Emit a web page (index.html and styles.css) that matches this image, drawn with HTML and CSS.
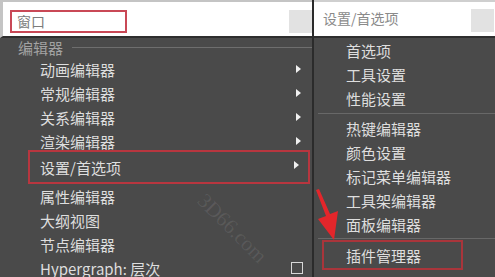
FILE: index.html
```html
<!DOCTYPE html>
<html lang="zh-CN">
<head>
    <meta charset="UTF-8">
    <title>窗口菜单</title>
    <link rel="stylesheet" href="styles.css">
</head>
<body>
    <div class="screen">
        <!-- Main window menu -->
        <section class="menu menu_main">
            <div class="search_bar">
                <div class="search_field">窗口</div>
                <span class="search_btn"></span>
            </div>
            <div class="section_head">编辑器</div>
            <ul class="menu_list">
                <li class="menu_item">动画编辑器<span class="sub_arrow"></span></li>
                <li class="menu_item">常规编辑器<span class="sub_arrow"></span></li>
                <li class="menu_item">关系编辑器<span class="sub_arrow"></span></li>
                <li class="menu_item">渲染编辑器<span class="sub_arrow"></span></li>
                <li class="menu_item menu_item_marked">设置/首选项<span class="sub_arrow"></span></li>
                <li class="menu_item">属性编辑器</li>
                <li class="menu_item">大纲视图</li>
                <li class="menu_item">节点编辑器</li>
                <li class="menu_item">Hypergraph: 层次<span class="check_box"></span></li>
            </ul>
            <span class="watermark watermark_main">3D66.com</span>
        </section>

        <!-- Settings submenu -->
        <section class="menu menu_sub">
            <div class="sub_head">
                <span class="sub_title">设置/首选项</span>
                <span class="search_btn"></span>
            </div>
            <ul class="menu_list sub_list">
                <li class="menu_item">首选项</li>
                <li class="menu_item">工具设置</li>
                <li class="menu_item">性能设置</li>
                <li class="menu_sep"></li>
                <li class="menu_item">热键编辑器</li>
                <li class="menu_item">颜色设置</li>
                <li class="menu_item">标记菜单编辑器</li>
                <li class="menu_item">工具架编辑器</li>
                <li class="menu_item">面板编辑器</li>
                <li class="menu_sep menu_sep_small"></li>
                <li class="menu_item menu_item_marked">插件管理器</li>
            </ul>
        </section>

        <!-- red pointer arrow -->
        <svg class="pointer" width="495" height="277" viewBox="0 0 495 277">
            <polygon points="316,190 319,189 330,214 338,211 334,240 318,219 326,216" fill="#e3262b"/>
        </svg>
    </div>
</body>
</html>
```

FILE: styles.css
```css
* {
    box-sizing: border-box;
}

body {
    margin: 0;
    background: #4a4a4a;
    font-family: "Noto Sans CJK SC", "Noto Sans", sans-serif;
    overflow: hidden;
}

.screen {
    position: relative;
    width: 495px;
    height: 277px;
    display: flex;
    overflow: hidden;
}

.menu {
    position: relative;
    height: 277px;
    background: #4a4a4a;
}

.menu_main {
    width: 314px;
    border-right: 2px solid #2b2b2b;
}

.menu_sub {
    flex: 1;
}

/* White search bar at the top */
.search_bar {
    height: 38px;
    display: flex;
    justify-content: space-between;
    align-items: flex-start;
    padding: 8px 0 0 7px;
    background: #fff;
    border-top: 2px solid #c4c4c4;
    border-left: 3px solid #c4c4c4;
    border-bottom: 2px solid #2e2e2e;
}

.search_field {
    width: 117px;
    height: 23px;
    padding-left: 5px;
    border: 2px solid #c94856;
    font-size: 14px;
    line-height: 19px;
    color: #7c7c7c;
}

.search_btn {
    width: 23px;
    height: 23px;
    background: #e2e2e2;
}

.section_head {
    height: 19px;
    display: flex;
    align-items: center;
    padding-left: 18px;
    font-size: 15px;
    color: #a2a2a2;
}

.section_head::after {
    content: '';
    flex: 1;
    height: 1px;
    margin: 0 0 0 9px;
    background: #6e6e6e;
}

.menu_list {
    list-style: none;
    margin: 0;
    padding: 0;
}

.menu_item {
    height: 24px;
    display: flex;
    align-items: center;
    justify-content: space-between;
    padding: 0 11px 0 40px;
    font-size: 15px;
    color: #dedede;
    white-space: nowrap;
}

.menu_item_marked {
    height: 34px;
    margin: -3px 2px 0 28px;
    padding: 0 9px 0 10px;
    border: 2px solid #b8363f;
}

.sub_arrow {
    width: 0;
    height: 0;
    border-left: 5px solid #f0f0f0;
    border-top: 4px solid transparent;
    border-bottom: 4px solid transparent;
}

.menu_item_marked .sub_arrow {
    margin-top: -4px;
}

.check_box {
    width: 12px;
    height: 12px;
    margin-right: -2px;
    border: 1px solid #d8d8d8;
}

/* Submenu */
.sub_head {
    height: 38px;
    display: flex;
    justify-content: space-between;
    align-items: flex-start;
    padding: 7px 1px 0 9px;
    background: #fff;
    border-top: 2px solid #cfcfcf;
    border-bottom: 2px solid #2e2e2e;
}

.sub_title {
    font-size: 14px;
    line-height: 18px;
    color: #8a8a8a;
}

.sub_list .menu_item {
    padding-left: 32px;
}

.menu_sep {
    height: 6px;
    display: flex;
    align-items: center;
    padding-left: 4px;
}

.menu_sep::before {
    content: '';
    flex: 1;
    height: 1px;
    background: #686868;
}

.menu_sep_small {
    height: 4px;
}

.sub_list .menu_item_marked {
    width: 141px;
    height: 30px;
    margin: 0 0 0 8px;
    padding: 0 0 0 22px;
    border-color: #a9353b;
}

/* faint site watermark */
.watermark {
    position: absolute;
    font-family: "Liberation Serif", serif;
    font-size: 21px;
    color: rgba(255, 255, 255, 0.09);
    transform: rotate(45deg);
    pointer-events: none;
}

.watermark_main {
    left: 188px;
    top: 216px;
}

.pointer {
    position: absolute;
    left: 0;
    top: 0;
    pointer-events: none;
}
```
